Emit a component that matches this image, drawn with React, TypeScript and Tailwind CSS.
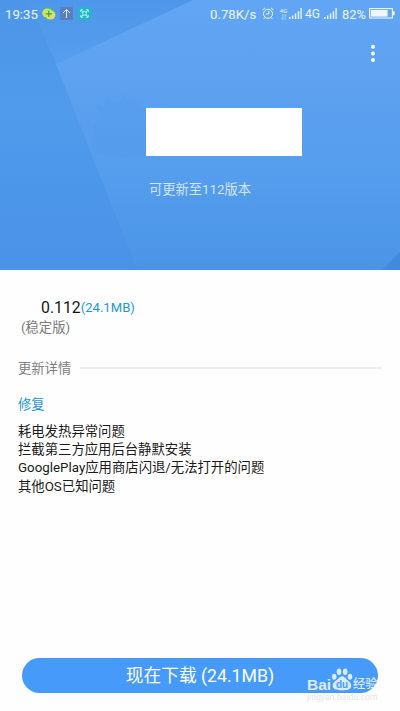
import React from 'react';

const changes = [
  '耗电发热异常问题',
  '拦截第三方应用后台静默安装',
  'GooglePlay应用商店闪退/无法打开的问题',
  '其他OS已知问题',
];

function SignalBars() {
  return (
    <svg width="14" height="12" viewBox="0 0 14 12" fill="#fff" fillOpacity="0.85">
      <rect x="0" y="9" width="1.5" height="2" />
      <rect x="2.9" y="7.5" width="1.5" height="3.5" />
      <rect x="5.8" y="5.5" width="1.5" height="5.5" />
      <rect x="8.7" y="3.2" width="1.5" height="7.8" />
      <rect x="11.4" y="0" width="1.4" height="11" />
    </svg>
  );
}

function StatusBar() {
  return (
    <div className="flex h-7 items-center justify-between px-[5px] pt-px text-[12.5px] text-white/90">
      <div className="flex items-center">
        <span className="w-[37px] pt-px text-[13.2px]">19:35</span>
        <svg className="-mt-px" width="14" height="14" viewBox="0 0 14 14">
          <path d="M1 4A6.5 6.5 0 0 1 13 6L9 11Z" fill="#35c878" />
          <path d="M13.5 7A6.4 6 0 0 1 4 11.8L1 8Z" fill="#3ec26e" />
          <ellipse cx="5.2" cy="6" rx="5" ry="4.6" fill="#cfe063" />
          <ellipse cx="8.5" cy="8" rx="4.9" ry="4.5" fill="#dde066" />
          <path d="M6.8 3.8v6M3.8 6.8h6" stroke="#3c9a52" strokeWidth="1.2" />
        </svg>
        <svg className="-mt-px ml-1" width="13" height="13" viewBox="0 0 13 13">
          <rect width="13" height="13" rx="0.8" fill="#597fbe" />
          <path d="M6.5 11V2.5M3 6l3.5-3.5L10 6" fill="none" stroke="#e0edff" strokeWidth="1" />
        </svg>
        <svg className="-mt-px ml-[5px]" width="13" height="13" viewBox="0 0 13 13">
          <rect width="13" height="13" rx="1.5" fill="#22b8ca" />
          <path
            d="M2.8 5V2.8H5M8 2.8h2.2V5M10.2 8v2.2H8M5 10.2H2.8V8M3 3l2 2M10 3L8 5M3 10l2-2M10 10L8 8"
            fill="none"
            stroke="#c4f5f5"
            strokeWidth="0.9"
          />
          <rect x="4.8" y="4.8" width="3.4" height="3.4" fill="none" stroke="#c4f5f5" strokeWidth="0.9" />
        </svg>
      </div>

      <div className="flex items-center">
        <span className="w-[52px] pt-px text-[13.2px] whitespace-nowrap">0.78K/s</span>
        <svg className="-mt-px" width="12" height="13" viewBox="0 0 12 13" fill="none" stroke="#fff" strokeOpacity="0.9">
          <circle cx="6" cy="6.8" r="4.5" />
          <path d="M6.8 4v3H4M.6 3L3 .9M11.4 3L9 .9M2.8 10.6l-1 1.3M9.2 10.6l1 1.3" />
        </svg>
        <div className="-mt-px ml-[5px] flex w-[9px] flex-col items-center">
          <span className="text-[6px] leading-[6px]">4G</span>
          <svg width="6" height="6" viewBox="0 0 6 6" fill="none" stroke="#fff" strokeOpacity="0.6" strokeWidth="0.7">
            <path d="M1.8 0v5.5L.5 4M4.2 6V.5L5.5 2" />
          </svg>
        </div>
        <span className="-mt-px ml-px"><SignalBars /></span>
        <span className="ml-[2px] w-[19px] text-[12px]">4G</span>
        <span className="-mt-px"><SignalBars /></span>
        <span className="ml-[4px] w-[27px] pt-px text-[12.8px]">82%</span>
        <svg className="-mt-px" width="26" height="11" viewBox="0 0 26 11">
          <rect x="0.6" y="0.6" width="22.8" height="9.4" fill="none" stroke="#fff" strokeOpacity="0.9" strokeWidth="1.1" />
          <rect x="1.8" y="2" width="16.8" height="6.6" fill="#fff" fillOpacity="0.9" />
          <rect x="24" y="3.3" width="1.6" height="4" fill="#fff" fillOpacity="0.9" />
        </svg>
      </div>
    </div>
  );
}

function HeaderBackdrop() {
  return (
    <svg className="absolute inset-0" width="400" height="270" viewBox="0 0 400 270">
      <defs>
        <linearGradient id="base" x1="0" y1="0" x2="0" y2="1">
          <stop offset="0" stopColor="#4c95e8" />
          <stop offset="0.4" stopColor="#509bec" />
          <stop offset="1" stopColor="#4992e8" />
        </linearGradient>
        <linearGradient id="light" x1="0" y1="0" x2="0" y2="1">
          <stop offset="0" stopColor="#61a6f4" />
          <stop offset="0.3" stopColor="#5da1f0" />
          <stop offset="0.65" stopColor="#559ded" />
          <stop offset="0.88" stopColor="#4e98e9" />
          <stop offset="1" stopColor="#4b93e7" />
        </linearGradient>
        <linearGradient id="wedge" x1="0" y1="0" x2="0" y2="1">
          <stop offset="0" stopColor="#4d96e9" />
          <stop offset="1" stopColor="#569fef" />
        </linearGradient>
      </defs>
      <rect width="400" height="270" fill="url(#base)" />
      <path d="M29 0H193L56 64Z" fill="url(#wedge)" />
      {/* the bounding box starts at the top edge, so the gradient spans the header */}
      <path d="M193 0H400V270H137L56 64Z" fill="url(#light)" />
      <path
        d="M92 150Q93 125 98 118L97 105L104 108L106 98L114 104L121 101L124 94L127 102L136 100L139 108H146V156Q110 160 92 150Z"
        fill="#4e98ea"
        fillOpacity="0.2"
      />
      <path d="M382 270L400 252V270Z" fill="#4389df" />
    </svg>
  );
}

function BaiduMark() {
  return (
    <div className="absolute right-0 top-[9px] flex w-[71px] flex-col text-white/80">
      <div className="flex h-[26px] items-end">
        <span className="w-[24px] font-['Liberation_Sans',sans-serif] text-[15.5px] leading-[17px] font-bold">Bai</span>
        <svg className="mb-[2px] shrink-0" width="22" height="23" viewBox="0 0 22 23">
          <g fill="#fff" fillOpacity="0.8">
            <ellipse cx="3.2" cy="8.8" rx="2.3" ry="3" />
            <ellipse cx="8" cy="3.8" rx="2.3" ry="3.2" />
            <ellipse cx="14.2" cy="3.8" rx="2.3" ry="3.2" />
            <ellipse cx="19" cy="8.8" rx="2.3" ry="3" />
            <path d="M11 8.2C8.6 8.2 7.8 10.6 5.4 12.2C3 14 1.3 15.8 1.8 18.6C2.4 21.9 5.7 22.3 11 22.3S19.6 21.9 20.2 18.6C20.7 15.8 18.8 14 16.6 12.2C14.3 10.4 13.4 8.2 11 8.2Z" />
          </g>
          <text x="11" y="20" textAnchor="middle" fontSize="10" fontWeight="700" fontFamily="Liberation Sans, sans-serif" fill="#469bfa">
            du
          </text>
        </svg>
        <span className="text-[12.3px] leading-[17px] font-medium whitespace-nowrap">经验</span>
      </div>
      <span className="text-[8.7px] leading-[9px] whitespace-nowrap text-[#e6e6e6]">jingyan.baidu.com</span>
    </div>
  );
}

export default function App() {
  return (
    <div className="flex h-[711px] w-[400px] flex-col overflow-hidden bg-[#fefefe] font-['Roboto','Noto_Sans_CJK_SC',sans-serif]">
      {/* Header */}
      <header className="relative h-[270px] shrink-0">
        <HeaderBackdrop />
        <div className="relative flex h-full flex-col">
          <StatusBar />
          <div className="flex justify-end pr-[24px] pt-[16px]">
            <svg width="6" height="20" viewBox="0 0 6 20" fill="#fff">
              <circle cx="3" cy="2.7" r="2" />
              <circle cx="3" cy="9.4" r="2" />
              <circle cx="3" cy="16.1" r="2" />
            </svg>
          </div>
          <div className="ml-[146px] mt-[44px] h-[48px] w-[156px] bg-white" />
          <p className="mt-[24px] text-center text-[13.3px] leading-5 text-white/75">可更新至112版本</p>
        </div>
      </header>

      {/* Release notes */}
      <main className="flex-1 px-[18px] pt-[28px]">
        <div className="ml-[23px] flex h-5 items-center">
          <span className="text-[15.8px] text-[#151515]">0.112</span>
          <span className="text-[13.1px] text-[#1d97d4]">(24.1MB)</span>
        </div>
        <p className="ml-[3px] text-[13.3px] leading-[19px] text-[#7b7b7b]">(稳定版)</p>

        <div className="mt-[21px] flex h-5 items-center gap-[9px]">
          <h2 className="pt-[2px] text-[13.3px] text-[#808080]">更新详情</h2>
          <div className="h-[2px] flex-1 bg-[#ececec]" />
        </div>

        <h3 className="mt-[17px] text-[13.3px] leading-5 text-[#1d97d4]">修复</h3>
        <ul className="mt-[8px] text-[13.35px] leading-[18.2px] text-[#1b1b1b]">
          {changes.map((line) => (
            <li key={line} className="whitespace-nowrap">{line}</li>
          ))}
        </ul>
      </main>

      {/* Download */}
      <footer className="h-[53px] shrink-0 px-[22px]">
        <div className="relative">
          <button className="flex h-[35px] w-full items-center justify-center rounded-full bg-[#469bfa] pt-px text-[17.7px] text-white">
            现在下载 (24.1MB)
          </button>
          <BaiduMark />
        </div>
      </footer>
    </div>
  );
}
